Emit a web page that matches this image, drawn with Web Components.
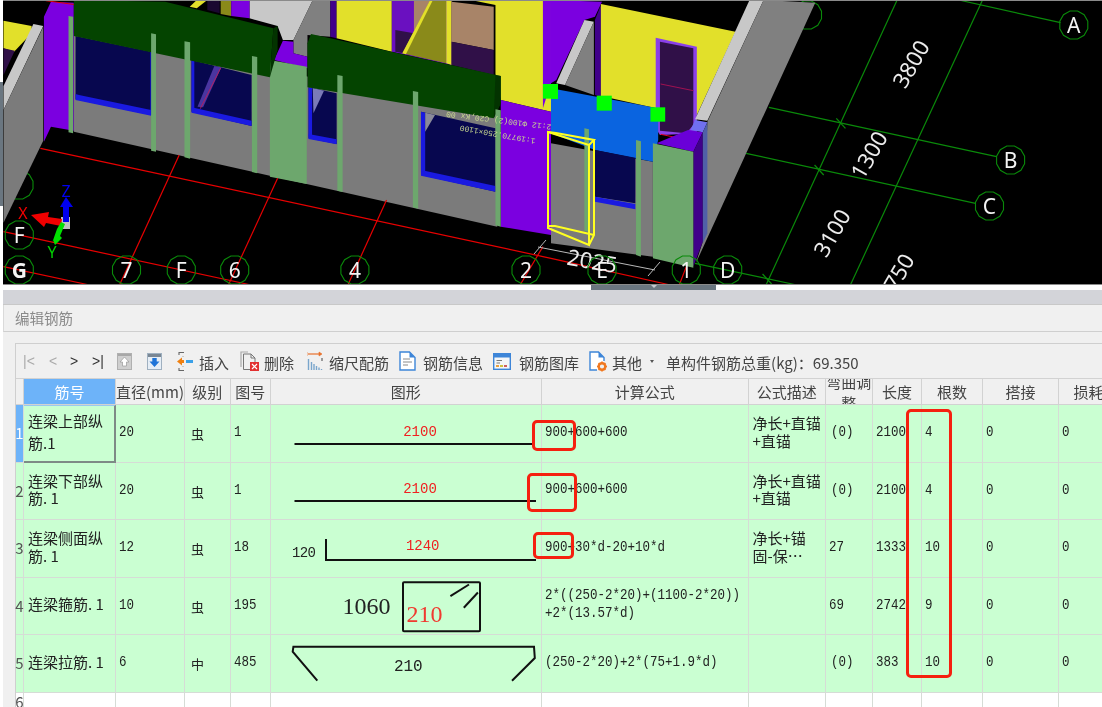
<!DOCTYPE html>
<html lang="zh">
<head>
<meta charset="utf-8">
<title>编辑钢筋</title>
<style>
  html, body { margin: 0; background: #fff; }
  body { width: 1102px; height: 707px; overflow: hidden; font-family: "Noto Sans CJK SC", "Noto Sans", sans-serif; }
</style>
</head>
<body>
<cad-view></cad-view>
<split-bar></split-bar>
<rebar-panel title-text="编辑钢筋">
  <rebar-toolbar></rebar-toolbar>
  <rebar-table>
    <rebar-mark style="left:516px;top:42px;width:44px;height:31px"></rebar-mark>
    <rebar-mark style="left:511px;top:95px;width:50px;height:39px"></rebar-mark>
    <rebar-mark style="left:517px;top:154px;width:41px;height:27px"></rebar-mark>
    <rebar-mark style="left:890px;top:31px;width:46px;height:269px"></rebar-mark>
  </rebar-table>
</rebar-panel>

<script>
// scene coords: the two groups below are written in the reference crop's scale
const Z1 = 'scale(.3514,.3333)';
const Z2 = 'translate(551,0) scale(.3514,.3333)';
const C = {
  beam: '#044400', pier: '#6da76d', purple: '#7b00e0', deep: '#40008a', wall: '#7b7b7b', light: '#c8c8c8',
  yellow: '#e2e02a', navy: '#07074f', blue: '#1a1ae0', lintel: '#0a64e0', handle: '#00ff00', dark: '#301048'
};
const GRID = '#0a8a0a';
const poly = (pts, fill) => `<polygon points="${pts}" fill="${fill}"/>`;
const ln = (a, b, c, d, col, w = 1) => `<line x1="${a}" y1="${b}" x2="${c}" y2="${d}" stroke="${col}" stroke-width="${w}"/>`;

function axisMark(x, y, label, bold) {
  let pts = [];
  for (let i = 0; i < 12; i++) {
    const a = Math.PI * 2 * i / 12 + Math.PI / 12;
    pts.push((x + 14.5 * Math.cos(a)).toFixed(1) + ',' + (y + 14.5 * Math.sin(a)).toFixed(1));
  }
  return `<polygon points="${pts.join(' ')}" fill="none" stroke="${GRID}" stroke-width="1.1"/>` +
    (label ? `<text x="${x}" y="${y + 7.5}" text-anchor="middle" font-size="21" ${bold ? 'font-weight="700"' : ''} fill="#f4f4f4">${label}</text>` : '');
}

class CadView extends HTMLElement {
  constructor() {
    super();
    this.attachShadow({ mode: 'open' });
  }
  connectedCallback() {
    const columns = [[195, 48, 208, 50, 208, 400, 195, 397], [430, 100, 444, 103, 444, 455, 430, 452], [525, 124, 541, 127, 541, 476, 525, 472],
      [717, 168, 732, 171, 732, 520, 717, 516], [960, 225, 975, 228, 975, 576, 960, 572], [1175, 273, 1190, 276, 1190, 626, 1175, 622], [1410, 328, 1425, 331, 1425, 680, 1410, 676]];
    this.shadowRoot.innerHTML = `
    <style>
      :host { display: block; position: relative; height: 285px; background: #fff; }
      svg { display: block; position: absolute; left: 3px; top: 0; filter: blur(.4px); }
      line, polyline { vector-effect: non-scaling-stroke; }
      text { font-family: "Noto Sans", sans-serif; }
      .strip { position: absolute; left: 0; top: 82px; width: 3px; height: 124px; background: #6a7680; }
    </style>
    <div class="strip"></div>
    <svg width="1099" height="285" viewBox="3 0 1099 285">
      <rect x="3" y="0" width="1099" height="285" fill="#000"/>
      ${axisMark(19, 185, '')}
      ${axisMark(807.5, 15, '')}

      <g transform="${Z1}">
        ${poly('10,62 90,78 90,100 40,155 10,145', C.yellow)}
        ${poly('10,145 42,152 10,225', C.dark)}
        ${poly('10,258 95,72 123,78 10,330', C.light)}
        ${poly('10,330 123,80 123,422 10,668', C.wall)}
        ${poly('125,50 145,5 210,8 210,392 145,380 125,425', C.purple)}
        ${ln(130, 2, 215, 14, '#e00000', 1)}
        ${poly('210,100 1415,335 1415,680 210,395', C.wall)}
        ${poly('710,0 890,0 835,120 805,120 790,78 710,55', C.light)}
        ${poly('890,0 940,0 940,110 875,105 875,170 835,160 835,120', '#808080')}
        ${poly('780,180 805,122 835,125 835,160 875,170 875,205', C.purple)}
        ${poly('540,20 560,0 590,0 560,25', '#e2e02a')}
        ${poly('590,0 625,0 625,40 590,30', '#1a0830')}
        ${poly('628,0 658,0 658,48 628,42', '#8a8a1a')}
        ${poly('658,0 710,0 710,55 658,48', C.purple)}
        ${poly('940,0 958,0 958,115 940,110', C.deep)}
        ${poly('958,0 1115,0 1115,155 958,115', C.yellow)}
        ${poly('1115,0 1285,0 1285,195 1145,162 1115,155', '#6a10c0')}
        ${poly('1178,0 1225,0 1178,98', '#a88468')}
        ${poly('1125,90 1178,100 1150,160 1125,155', C.dark)}
        ${poly('1145,160 1225,0 1270,0 1270,190', '#8a8a1a')}
        ${poly('1145,160 1224,0 1232,0 1155,163', C.yellow)}
        ${poly('1270,0 1285,0 1285,195 1270,190', C.yellow)}
        ${poly('1285,5 1405,20 1405,150 1285,125', '#a88468')}
        ${poly('1285,125 1405,150 1405,225 1285,195', C.dark)}
        ${poly('1340,0 1568,0 1568,335 1425,300 1410,222 1410,15', C.yellow)}
        ${poly('1545,0 1568,0 1568,250 1545,325', C.purple)}
        ${poly('1425,300 1568,335 1568,705 1425,680', C.purple)}
        ${poly('1545,252 1568,252 1568,296 1545,296', C.handle)}

        ${poly('215,108 430,155 430,345 215,298', C.navy)}
        ${poly('215,282 225,285 430,330 430,347 215,300', C.blue)}
        ${poly('428,155 434,155 434,345 428,345', C.blue)}
        ${poly('545,180 716,225 716,378 545,335', C.navy)}
        ${poly('545,322 716,362 716,378 545,338', C.blue)}
        ${poly('545,180 553,182 553,330 545,330', C.blue)}
        ${poly('610,198 630,202 578,322 562,320', '#4a35a0')}
        ${ln(628, 204, 570, 326, '#b02060', 1)}
        ${poly('878,262 958,280 958,432 878,415', C.navy)}
        ${poly('878,402 958,418 958,433 878,417', C.blue)}
        ${poly('878,262 888,264 888,410 878,410', C.blue)}
        ${poly('890,264 922,272 892,340', '#7a7ab8')}
        ${poly('1198,335 1410,385 1410,575 1198,525', C.navy)}
        ${poly('1198,510 1410,558 1410,575 1198,527', C.blue)}
        ${poly('1198,335 1210,338 1210,515 1198,515', C.blue)}
        ${poly('1210,338 1238,345 1210,395', '#8a8a9a')}

        ${poly('768,180 873,200 873,552 768,530', C.pier)}
        ${poly('210,0 470,5 778,85 768,232 210,108', C.beam)}
        ${poly('778,85 790,78 790,150 768,232', '#033300')}
        ${poly('875,130 885,102 1425,228 1425,310 1405,355 875,262', C.beam)}
        ${poly('1410,226 1425,228 1425,310 1405,355', '#033300')}
        ${columns.map(c => poly(c.join(','), C.pier)).join('')}

        ${ln(115, 445, 1568, 775, '#e80000', 1.2)}
        ${ln(10, 695, 715, 855, '#e80000', 1.2)}
        ${ln(10, 800, 255, 855, '#e80000', 1.2)}
        ${ln(510, 465, 340, 855, '#e80000', 1.2)}
        ${ln(790, 535, 650, 855, '#e80000', 1.2)}
        ${ln(1100, 600, 990, 855, '#e80000', 1.2)}
        ${ln(1545, 740, 1480, 855, '#e80000', 1.2)}
      </g>

      <g transform="${Z2}">
        ${poly('0,0 145,5 125,50 95,60 15,240 0,250', C.purple)}
        ${poly('95,60 122,65 40,255 15,250', C.light)}
        ${poly('122,65 122,285 40,255', '#808080')}
        ${poly('125,60 142,15 142,290 125,285', C.deep)}
        ${poly('142,12 525,95 415,345 300,325 142,288', C.yellow)}
        ${poly('298,113 415,140 415,400 385,402 310,405 298,385', '#8a40e8')}
        ${poly('310,125 405,145 405,375 385,400 310,392', C.dark)}
        ${ln(312, 252, 405, 272, '#a01050', 1)}
        ${ln(312, 403, 382, 418, '#e00020', 1)}
        ${poly('565,0 605,0 445,362 410,358', C.light)}
        ${poly('605,0 752,8 412,790 432,725 445,365', '#808080')}
        ${poly('410,360 445,367 432,397 397,390', '#7070f0')}
        ${poly('300,430 390,390 432,397 405,455', '#6a00d8')}
        ${poly('405,455 432,397 432,725 405,800', C.deep)}
        ${poly('432,397 445,367 445,700 432,730', '#5060a8')}
        ${poly('0,430 290,485 290,770 0,730', C.wall)}
        ${poly('0,265 305,325 305,420 290,485 240,475 125,450 0,400', C.lintel)}
        ${poly('125,450 240,473 240,610 125,590', C.navy)}
        ${poly('125,590 240,612 240,628 125,605', C.blue)}
        ${poly('242,420 256,424 256,770 242,765', C.pier)}
        ${poly('95,385 108,388 108,695 95,692', C.pier)}
        ${poly('290,430 405,455 405,803 290,775', C.pier)}
        ${poly('0,252 20,252 20,297 0,297', C.handle)}
        ${poly('130,287 173,287 173,332 130,332', C.handle)}
        ${poly('283,322 325,322 325,365 283,365', C.handle)}

        ${ln(1160, 0, 1450, 68, GRID, 1.2)}
        ${ln(620, 322, 1268, 470, GRID, 1.2)}
        ${ln(555, 460, 1208, 610, GRID, 1.2)}
        ${ln(410, 790, 700, 855, GRID, 1.2)}
        ${ln(985, 0, 612, 855, GRID, 1.2)}
        ${ln(1228, 0, 852, 855, GRID, 1.2)}
        ${ln(812, 355, 838, 385, GRID, 1.2)}
        ${ln(750, 495, 776, 525, GRID, 1.2)}
        ${ln(602, 822, 628, 852, GRID, 1.2)}
        ${ln(0, 775, 340, 855, '#e80000', 1.2)}
        ${ln(385, 800, 365, 855, '#e80000', 1.2)}
      </g>

      <polygon points="548,132 589,145 589,245 548,228" fill="none" stroke="#ffff20" stroke-width="2"/>
      <polyline points="548,132 556,133 594,140 589,145" fill="none" stroke="#ffff20" stroke-width="2"/>
      <polyline points="594,140 594,235 589,245" fill="none" stroke="#ffff20" stroke-width="2"/>
      <polyline points="548,226 555,226 594,235" fill="none" stroke="#ffff20" stroke-width="2"/>

      ${ln(538, 247, 655, 270, '#b8b8b8')}
      ${ln(534, 254, 546, 240, '#b8b8b8')}
      ${ln(648, 276, 660, 262, '#b8b8b8')}

      <g fill="#c8d890" text-anchor="middle">
        <text transform="translate(499,118) rotate(187)" style="font:8px 'Liberation Mono',monospace">2:12 Φ100(2) C20,Kx 00</text>
        <text transform="translate(498,132) rotate(190)" style="font:8px 'Liberation Mono',monospace">1:19770.250×1100</text>
      </g>

      <g fill="#ececec" font-size="22" text-anchor="middle">
        <text transform="translate(911,64) rotate(-60)" y="8">3800</text>
        <text transform="translate(869,155) rotate(-60)" y="8">1300</text>
        <text transform="translate(832,233) rotate(-60)" y="8">3100</text>
        <text transform="translate(899,272) rotate(-60)" y="8">750</text>
        <text transform="translate(592,262) rotate(10)" y="7">2025</text>
      </g>

      ${axisMark(19.3, 235, 'F')}
      ${axisMark(19.3, 270, 'G', true)}
      ${axisMark(126.5, 270, '7')}
      ${axisMark(181.3, 270, 'F')}
      ${axisMark(234.7, 270, '6')}
      ${axisMark(354.9, 270, '4')}
      ${axisMark(526, 270, '2')}
      ${axisMark(602, 270, 'E')}
      ${axisMark(686.3, 270, '1')}
      ${axisMark(727.7, 270, 'D')}
      ${axisMark(1073.8, 25, 'A')}
      ${axisMark(1010.6, 160, 'B')}
      ${axisMark(989.5, 206, 'C')}

      <!-- xyz gizmo -->
      <rect x="61" y="217" width="9" height="12" fill="#c0c0c0"/>
      <polygon points="66,197 73,207 69,207 69,222 63,222 63,207 60,207" fill="#0000f0"/>
      <polygon points="31,215 49,212 48,217 62,219 61,226 46,223 44,227" fill="#f00000"/>
      <polygon points="65,224 60,236 62,238 55,245 53,240 51,246 57,229 61,222" fill="#00e000"/>
      <text x="66" y="197" text-anchor="middle" font-size="16" fill="#0000f0">Z</text>
      <text x="23" y="219" text-anchor="middle" font-size="16" fill="#f00000">X</text>
      <text x="52" y="258" text-anchor="middle" font-size="16" fill="#00d000">Y</text>

      <rect x="3" y="0" width="1099" height="1" fill="#8a8a8a"/>
      <rect x="3" y="284" width="1099" height="1" fill="#8a8a8a"/>
    </svg>`;
  }
}
customElements.define('cad-view', CadView);

class SplitBar extends HTMLElement {
  constructor() {
    super();
    this.attachShadow({ mode: 'open' });
    this.shadowRoot.innerHTML = `
    <style>
      :host { display: flex; height: 5px; background: #fff; padding-left: 591px; }
      .grip { width: 125px; height: 5px; background: #6a7680; display: flex; justify-content: center; }
      .grip i { width: 0; height: 0; border: 3.5px solid transparent; border-top-color: #c5cad0; border-bottom: 0; }
    </style>
    <div class="grip"><i></i></div>`;
  }
}
customElements.define('split-bar', SplitBar);

class RebarPanel extends HTMLElement {
  constructor() {
    super();
    this.attachShadow({ mode: 'open' });
  }
  connectedCallback() {
    this.shadowRoot.innerHTML = `
    <style>
      :host { display: block; margin-left: 3px; height: 417px; background: #f0f0f0; overflow: hidden; color: #444; filter: blur(.3px); }
      .strip { height: 14px; background: #d3d4d9; border-bottom: 1px solid #c8c8c8; }
      .title { height: 26px; line-height: 26px; padding-left: 11px; font-size: 14.5px; color: #8a8a8a; border-bottom: 1px solid #cfcfcf; border-left: 1px solid #dadada; box-sizing: content-box; }
      .body { padding: 11px 0 0 12px; }
    </style>
    <div class="strip"></div>
    <div class="title">${this.getAttribute('title-text')}</div>
    <div class="body"><slot></slot></div>`;
  }
}
customElements.define('rebar-panel', RebarPanel);

const ICONS = {
  up: `<svg width="15" height="17" viewBox="0 0 15 17"><rect x=".5" y=".5" width="14" height="16" fill="#cfcfcf" stroke="#b0b0b0"/><rect x="1" y="1" width="13" height="2" fill="#a8a8a8"/><path d="M7.5 4 L12 9 H9.5 V13 H5.5 V9 H3 Z" fill="#fff" stroke="#9a9a9a" stroke-width=".7"/></svg>`,
  down: `<svg width="15" height="17" viewBox="0 0 15 17"><rect x=".5" y=".5" width="14" height="16" fill="#e6eef6" stroke="#9fb0c0"/><rect x="1" y="1" width="13" height="3" fill="#7a8794"/><path d="M7.5 14 L12.5 8.5 H9.7 V5 H5.3 V8.5 H2.5 Z" fill="#1f74d8"/></svg>`,
  insert: `<svg width="17" height="21" viewBox="0 0 17 21"><path d="M2 4 V1.5 H7 M2 17 V19.5 H7 M6 5.5 V5 M6 16 V15.5" fill="none" stroke="#666" stroke-width="1.1"/><path d="M0 10.5 L5 6.5 V9 H7 V12 H5 V14.5 Z" fill="#f08010"/><rect x="9" y="9" width="7" height="3" fill="#3aa0e8"/></svg>`,
  remove: `<svg width="19" height="20" viewBox="0 0 19 20"><path d="M1 16 V1 H8" fill="none" stroke="#aaa" stroke-width="1.2"/><path d="M3.5 18.5 V3 H11 L15 7 V11 M11 3 V7 H15 M3.5 18.5 H10" fill="none" stroke="#777" stroke-width="1"/><rect x="10" y="11" width="9" height="9" fill="#e23030"/><path d="M12 13 L17 18 M17 13 L12 18" stroke="#fff" stroke-width="1.2"/></svg>`,
  scale: `<svg width="16" height="20" viewBox="0 0 16 20"><path d="M1 3 H12" stroke="#e8702a" stroke-width="1.2"/><path d="M12 1 L15 3 L12 5 Z M0 1 V5" fill="#e8702a" stroke="#e8702a" stroke-width=".6"/><path d="M1.5 8 V19 M4.5 11 V19 M7 13 V19 M9.5 15 V19 M12 16.5 V19 M14.5 18 V19" stroke="#7aa6cc" stroke-width="1.4"/><path d="M15 7 V10" stroke="#444" stroke-width="1"/></svg>`,
  doc: `<svg width="17" height="20" viewBox="0 0 17 20"><path d="M1 1 H10.5 L16 6.5 V19 H1 Z" fill="#fff" stroke="#3d85d8" stroke-width="1.4"/><path d="M10.5 1 V6.5 H16 Z" fill="#3d85d8"/><path d="M4 8 H11 M4 11 H13 M4 14 H9" stroke="#8a8a8a" stroke-width="1"/></svg>`,
  lib: `<svg width="18" height="17" viewBox="0 0 18 17"><rect x=".7" y=".7" width="16.6" height="15.6" fill="#f4f6f8" stroke="#3d85d8" stroke-width="1.4"/><rect x="1" y="1" width="16" height="3.5" fill="#3d85d8"/><path d="M3.5 7.5 H9 M3.5 10 H7" stroke="#777" stroke-width="1"/><rect x="3" y="12" width="3" height="2" fill="#e8a040"/><rect x="7" y="12" width="3" height="2" fill="#d0c040"/><rect x="11" y="12" width="3" height="2" fill="#d06060"/></svg>`,
  other: `<svg width="18" height="21" viewBox="0 0 18 21"><path d="M8 19 H1 V1 H9.5 L15 6.5 V10" fill="#fff" stroke="#3d85d8" stroke-width="1.4"/><path d="M9.5 1 V6.5 H15 Z" fill="#3d85d8"/><circle cx="13" cy="15.5" r="3.3" fill="none" stroke="#f07820" stroke-width="2.4"/><path d="M13 10.5 V12 M13 19 V20.5 M8 15.5 H9.5 M16.5 15.5 H18 M9.6 12 L10.6 13 M15.4 18 L16.4 19 M16.4 12 L15.4 13 M10.6 18 L9.6 19" stroke="#f07820" stroke-width="1.6"/></svg>`
};

class ToolButton extends HTMLElement {
  constructor() {
    super();
    this.attachShadow({ mode: 'open' });
  }
  connectedCallback() {
    this.shadowRoot.innerHTML = `
    <style>
      :host { display: inline-flex; align-items: center; font-size: 15px; color: #444; white-space: nowrap; }
      svg { display: block; }
      span { padding-top: 2px; }
    </style>
    ${ICONS[this.getAttribute('icon')] || ''}
    <span style="margin-left:${this.getAttribute('gap') || 0}px"><slot></slot></span>`;
  }
}
customElements.define('tool-button', ToolButton);

class RebarToolbar extends HTMLElement {
  constructor() {
    super();
    this.attachShadow({ mode: 'open' });
    this.shadowRoot.innerHTML = `
    <style>
      :host { display: flex; align-items: center; height: 35px; box-sizing: border-box; padding-left: 7px; margin-top: 0;
        border-top: 1px solid #cfcfcf; border-left: 1px solid #cfcfcf; background: #f0f0f0; }
      .nav { display: flex; align-items: center; font: 14px "Liberation Sans", sans-serif; }
      .nav b { font-weight: 400; height: 17px; line-height: 16px; }
      .off { color: #aaa; }
      .on { color: #333; }
      .caret { width: 0; height: 0; border: 2.5px solid transparent; border-top: 3px solid #555; border-bottom: 0; margin-left: 8px; }
      .sum { margin-left: 10px; padding-top: 2px; font-size: 15px; color: #444; white-space: nowrap; }
      tool-button { flex: none; }
    </style>
    <div class="nav">
      <b class="off" style="width:12px">|&lt;</b>
      <b class="off" style="margin-left:14px;width:7px">&lt;</b>
      <b class="on" style="margin-left:14px;width:8px">&gt;</b>
      <b class="on" style="margin-left:14px;width:12px">&gt;|</b>
    </div>
    <tool-button icon="up" style="margin-left:13px"></tool-button>
    <tool-button icon="down" style="margin-left:15px"></tool-button>
    <tool-button icon="insert" gap="5" style="margin-left:15px">插入</tool-button>
    <tool-button icon="remove" gap="5" style="margin-left:11px">删除</tool-button>
    <tool-button icon="scale" gap="6" style="margin-left:13px">缩尺配筋</tool-button>
    <tool-button icon="doc" gap="7" style="margin-left:10px">钢筋信息</tool-button>
    <tool-button icon="lib" gap="8" style="margin-left:10px">钢筋图库</tool-button>
    <tool-button icon="other" gap="5" style="margin-left:10px">其他</tool-button>
    <span class="caret"></span>
    <span class="sum" style="margin-left:12px">单构件钢筋总重(kg)：69.350</span>`;
  }
}
customElements.define('rebar-toolbar', RebarToolbar);

const GRAPHS = [
  `<line x1="23.5" y1="39" x2="261" y2="39" class="k"/><text x="149" y="31" class="r">2100</text>`,
  `<line x1="23.5" y1="39" x2="265" y2="39" class="k"/><text x="149" y="31" class="r">2100</text>`,
  `<text x="21" y="37" class="t" textLength="24">120</text><polyline points="55,19 55,40 265,40" class="k"/><text x="151.7" y="30" class="r">1240</text>`,
  `<text x="71.6" y="37" class="big">1060</text><rect x="132" y="5.2" width="77" height="49" rx="1" class="k"/>
   <text x="135.5" y="44.5" class="big" style="fill:#f03a30">210</text>
   <line x1="179.4" y1="19.2" x2="198" y2="7.5" class="k"/><line x1="192.8" y1="30.8" x2="206.9" y2="15.5" class="k"/>`,
  `<polyline points="46.3,45.7 21.7,16.7 22.4,11.7 263,11.7 263.8,23 241,45.7" class="k"/><text x="137.3" y="35.5" class="t" style="font-size:16px;text-anchor:middle">210</text>`
];

// 筋号, 直径, 级别, 图号, 公式, 描述, 弯曲, 长度, 根数, 搭接, 损耗
const ROWS = [
  ['连梁上部纵<br>筋.1', '20', '虫', '1', '900+600+600', '净长+直锚<br>+直锚', '(0)', '2100', '4', '0', '0'],
  ['连梁下部纵<br>筋. 1', '20', '虫', '1', '900+600+600', '净长+直锚<br>+直锚', '(0)', '2100', '4', '0', '0'],
  ['连梁侧面纵<br>筋. 1', '12', '虫', '18', '900+30*d-20+10*d', '净长+锚<br>固-保…', '27', '1333', '10', '0', '0'],
  ['连梁箍筋. 1', '10', '虫', '195', '2*((250-2*20)+(1100-2*20))<br>+2*(13.57*d)', '', '69', '2742', '9', '0', '0'],
  ['连梁拉筋. 1', '6', '中', '485', '(250-2*20)+2*(75+1.9*d)', '', '(0)', '383', '10', '0', '0']
];
const HEAD = ['', '筋号', '直径(mm)', '级别', '图号', '图形', '计算公式', '公式描述', '弯曲调整', '长度', '根数', '搭接', '损耗'];

class RebarTable extends HTMLElement {
  constructor() {
    super();
    this.attachShadow({ mode: 'open' });
  }
  connectedCallback() {
    const num = v => `<span class="n">${v}</span>`;
    let cells = HEAD.map((h, i) => `<div class="h ${i == 1 ? 'cur' : ''}"><span>${h}</span></div>`).join('');
    ROWS.forEach((r, i) => {
      cells += `<div class="c head ${i == 0 ? 'sel' : ''}">${i + 1}</div>`;
      cells += `<div class="c name ${i == 0 ? 'active' : ''}"><span>${r[0]}</span></div>`;
      cells += `<div class="c">${num(r[1])}</div>`;
      cells += `<div class="c grade">${r[2]}</div>`;
      cells += `<div class="c">${num(r[3])}</div>`;
      cells += `<div class="c graph"><svg width="270" height="57">${GRAPHS[i]}</svg></div>`;
      cells += `<div class="c fx">${num(r[4])}</div>`;
      cells += `<div class="c desc"><span>${r[5]}</span></div>`;
      cells += `<div class="c" style="padding-left:${r[6] == '(0)' ? 5 : 3}px">${num(r[6])}</div>`;
      cells += `<div class="c">${num(r[7])}</div>`;
      cells += `<div class="c">${num(r[8])}</div>`;
      cells += `<div class="c">${num(r[9])}</div>`;
      cells += `<div class="c">${num(r[10])}</div>`;
    });
    for (let i = 0; i < 13; i++) cells += `<div class="c blank ${i == 0 ? 'head' : ''}">${i == 0 ? '6' : ''}</div>`;
    this.shadowRoot.innerHTML = `
    <style>
      :host { display: block; position: relative; height: 329px; border-left: 1px solid #cfcfcf; margin-right: -60px; }
      .grid { display: grid; grid-template-columns: 8px 92px 69px 45.5px 40.5px 270.5px 207.5px 76.5px 47.5px 49px 61px 76px 60px;
        grid-template-rows: 27px repeat(5, 57.5px) 40px; }
      .h { display: flex; align-items: center; justify-content: center; overflow: hidden; background: #f0f0f0; font-size: 15px; line-height: 21px; color: #444;
        text-align: center; border-top: 1.5px solid #d2d2d2; border-right: 1.5px solid #d2d2d2; border-bottom: 1.5px solid #d2d2d2; box-sizing: border-box; }
      .cur { background: #6db3f9; color: #fff; }
      .c { display: flex; align-items: center; overflow: hidden; box-sizing: border-box; padding: 0 0 0 3px; background: #caffd2; color: #222;
        font-size: 15px; line-height: 17.7px; border-right: 1.5px solid #d6dcd6; border-bottom: 1.5px solid #d6dcd6; }
      .n { font-family: "Liberation Mono", monospace; font-size: 15px; display: inline-block; transform: scaleX(.833); transform-origin: 0 50%; white-space: nowrap; }
      .head { padding: 0; justify-content: center; color: #555; overflow: visible; }
      .sel { background: #6db3f9; color: #fff; }
      .name { padding: 0 0 3px 4px; overflow: visible; }
      .active { border-right: 2px solid #7e8a86; border-bottom: 2px solid #7e8a86; border-top: 1px solid #9cc7ee; line-height: 21.7px; }
      .grade { padding: 2px 0 0 6px; font-size: 13px; }
      .graph { padding: 0; overflow: visible; position: relative; }
      .graph svg { display: block; overflow: visible; }
      .fx { padding: 0 0 2px 3.5px; line-height: 17.3px; overflow: visible; }
      .desc { padding: 0 0 3px 3.5px; }
      .k { fill: none; stroke: #111; stroke-width: 2; }
      .r { fill: #f02020; font: 14px "Liberation Mono", monospace; text-anchor: middle; }
      .t { fill: #222; font: 14px "Liberation Mono", monospace; }
      .big { fill: #222; font: 24px "Liberation Serif", serif; }
      .blank { background: #fff; align-items: flex-start; }
    </style>
    <div class="grid">${cells}</div>
    <slot></slot>`;
  }
}
customElements.define('rebar-table', RebarTable);

class RebarMark extends HTMLElement {
  constructor() {
    super();
    this.attachShadow({ mode: 'open' });
    this.shadowRoot.innerHTML = `
    <style>
      :host { display: block; position: absolute; box-sizing: border-box; border: 3.5px solid #f5200f; border-radius: 5px; }
    </style>`;
  }
}
customElements.define('rebar-mark', RebarMark);
</script>
</body>
</html>
